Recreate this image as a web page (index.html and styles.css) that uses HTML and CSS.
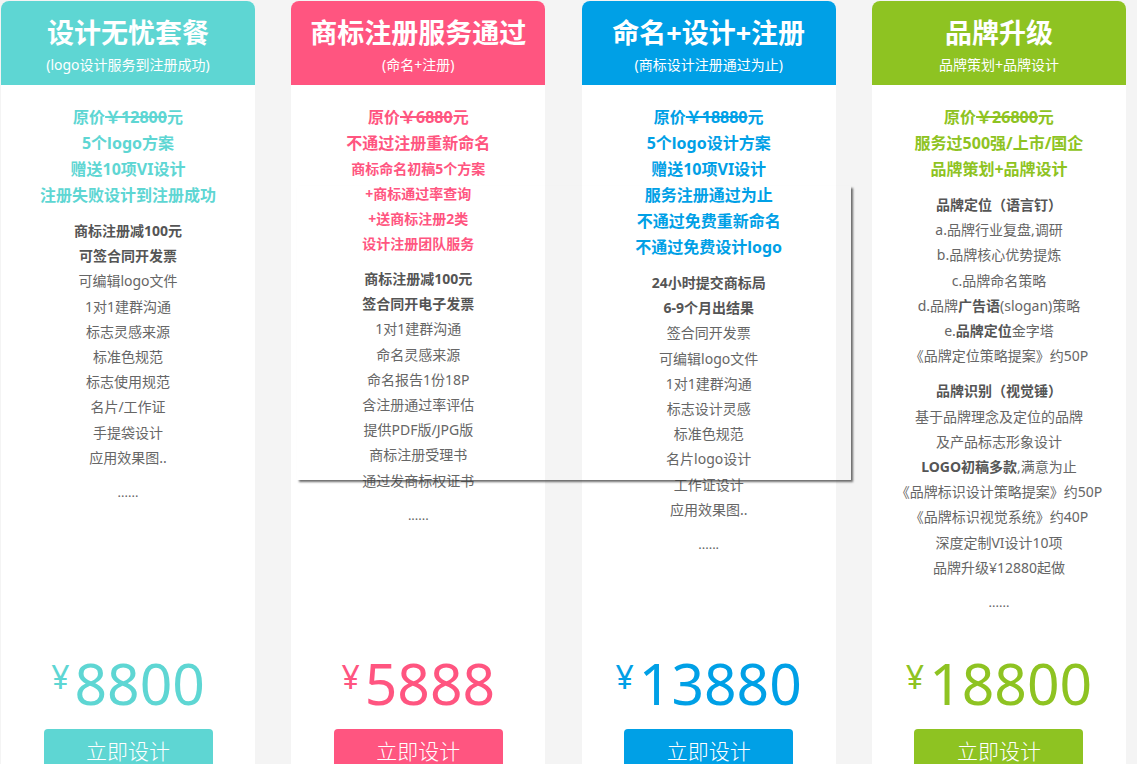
FILE: index.html
```html
<!DOCTYPE html>
<html lang="zh-CN">
<head>
<meta charset="utf-8">
<title>套餐</title>
<link rel="stylesheet" href="styles.css">
</head>
<body>
<div class="page">
  <div class="cards">
    <div class="card teal">
      <div class="head">
        <div class="title">设计无忧套餐</div>
        <div class="sub">(logo设计服务到注册成功)</div>
      </div>
      <div class="body">
        <div class="hi">
          <p class="big">原价<s>￥12800</s>元</p>
          <p class="big">5个logo方案</p>
          <p class="big">赠送10项VI设计</p>
          <p class="big">注册失败设计到注册成功</p>
        </div>
        <div class="list">
          <p class="b">商标注册减100元</p>
          <p class="b">可签合同开发票</p>
          <p>可编辑logo文件</p>
          <p>1对1建群沟通</p>
          <p>标志灵感来源</p>
          <p>标准色规范</p>
          <p>标志使用规范</p>
          <p>名片/工作证</p>
          <p>手提袋设计</p>
          <p>应用效果图..</p>
        </div>
        <div class="list"><p class="dots">......</p></div>
      </div>
      <div class="price"><span class="yen">¥</span>8800</div>
      <a class="btn">立即设计</a>
    </div>

    <div class="card pink">
      <div class="head">
        <div class="title">商标注册服务通过</div>
        <div class="sub">(命名+注册)</div>
      </div>
      <div class="body">
        <div class="hi">
          <p class="big">原价<s>￥6880</s>元</p>
          <p class="big">不通过注册重新命名</p>
          <p class="small">商标命名初稿5个方案</p>
          <p class="small">+商标通过率查询</p>
          <p class="small">+送商标注册2类</p>
          <p class="small">设计注册团队服务</p>
        </div>
        <div class="list">
          <p class="b">商标注册减100元</p>
          <p class="b">签合同开电子发票</p>
          <p>1对1建群沟通</p>
          <p>命名灵感来源</p>
          <p>命名报告1份18P</p>
          <p>含注册通过率评估</p>
          <p>提供PDF版/JPG版</p>
          <p>商标注册受理书</p>
          <p>通过发商标权证书</p>
        </div>
        <div class="list"><p class="dots">......</p></div>
      </div>
      <div class="price"><span class="yen">¥</span>5888</div>
      <a class="btn">立即设计</a>
    </div>

    <div class="card blue">
      <div class="head">
        <div class="title">命名+设计+注册</div>
        <div class="sub">(商标设计注册通过为止)</div>
      </div>
      <div class="body">
        <div class="hi">
          <p class="big">原价<s>￥18880</s>元</p>
          <p class="big">5个logo设计方案</p>
          <p class="big">赠送10项VI设计</p>
          <p class="big">服务注册通过为止</p>
          <p class="big">不通过免费重新命名</p>
          <p class="big">不通过免费设计logo</p>
        </div>
        <div class="list">
          <p class="b">24小时提交商标局</p>
          <p class="b">6-9个月出结果</p>
          <p>签合同开发票</p>
          <p>可编辑logo文件</p>
          <p>1对1建群沟通</p>
          <p>标志设计灵感</p>
          <p>标准色规范</p>
          <p>名片logo设计</p>
          <p>工作证设计</p>
          <p>应用效果图..</p>
        </div>
        <div class="list"><p class="dots">......</p></div>
      </div>
      <div class="price"><span class="yen">¥</span>13880</div>
      <a class="btn">立即设计</a>
    </div>

    <div class="card green">
      <div class="head">
        <div class="title">品牌升级</div>
        <div class="sub">品牌策划+品牌设计</div>
      </div>
      <div class="body">
        <div class="hi">
          <p class="big">原价<s>￥26800</s>元</p>
          <p class="big">服务过500强/上市/国企</p>
          <p class="big">品牌策划+品牌设计</p>
        </div>
        <div class="list">
          <p class="b">品牌定位（语言钉）</p>
          <p>a.品牌行业复盘,调研</p>
          <p>b.品牌核心优势提炼</p>
          <p>c.品牌命名策略</p>
          <p>d.品牌<b>广告语</b>(slogan)策略</p>
          <p>e.<b>品牌定位</b>金字塔</p>
          <p>《品牌定位策略提案》约50P</p>
        </div>
        <div class="list">
          <p class="b">品牌识别（视觉锤）</p>
          <p>基于品牌理念及定位的品牌</p>
          <p>及产品标志形象设计</p>
          <p><b>LOGO初稿多款</b>,满意为止</p>
          <p>《品牌标识设计策略提案》约50P</p>
          <p>《品牌标识视觉系统》约40P</p>
          <p>深度定制VI设计10项</p>
          <p>品牌升级¥12880起做</p>
        </div>
        <div class="list"><p class="dots">......</p></div>
      </div>
      <div class="price"><span class="yen">¥</span>18800</div>
      <a class="btn">立即设计</a>
    </div>
  </div>
  <div class="shadow-box"></div>
</div>
</body>
</html>
```

FILE: styles.css
```css
* { box-sizing: border-box; }
html, body {
  margin: 0;
  padding: 0;
  background: #f4f4f4;
  font-family: "Noto Sans", "Noto Sans CJK SC", sans-serif;
  overflow: hidden;
}
.page {
  position: relative;
  width: 1137px;
  height: 764px;
  overflow: hidden;
}
.cards {
  display: flex;
  gap: 36.33px;
  padding: 1px 0 0 1px;
}
.card {
  width: 254px;
  flex: none;
  background: #fff;
  border-radius: 8px 8px 0 0;
  display: flex;
  flex-direction: column;
  align-items: center;
  height: 820px;
}
.head {
  width: 100%;
  height: 84px;
  border-radius: 8px 8px 0 0;
  color: #fff;
  text-align: center;
  padding-top: 13px;
}
.title {
  font-size: 27px;
  font-weight: 700;
  line-height: 38px;
}
.sub {
  font-size: 14px;
  line-height: 18px;
  margin-top: 4px;
}
.body {
  width: 100%;
  height: 555px;
  padding-top: 19px;
  text-align: center;
}
.body p { margin: 0; }
.hi p.big {
  font-size: 16px;
  font-weight: 700;
  line-height: 26px;
}
.hi p.small {
  font-size: 14px;
  font-weight: 700;
  line-height: 25px;
}
.hi s { text-decoration-thickness: 2px; }
.list {
  margin-top: 10px;
  color: #666;
  font-size: 14px;
  line-height: 25.2px;
}
.list p.b, .list b { font-weight: 700; color: #555; }
.list p.dots { font-size: 13px; }
.price {
  font-size: 57px;
  line-height: 57px;
  font-weight: 400;
  margin-top: 15px;
  display: flex;
  align-items: flex-start;
}
.yen {
  font-size: 32px;
  line-height: 30px;
  margin-top: 7px;
  margin-right: 5px;
}
.btn {
  display: block;
  margin-top: 17px;
  width: 169px;
  height: 44px;
  border-radius: 4px;
  color: #fff;
  font-size: 21px;
  line-height: 44px;
  text-align: center;
  font-weight: 300;
}
.teal .head, .teal .btn { background: #5ed6d3; }
.teal .hi, .teal .price { color: #5ed6d3; }
.pink .head, .pink .btn { background: #ff5580; }
.pink .hi, .pink .price { color: #ff5580; }
.blue .head, .blue .btn { background: #00a0e6; }
.blue .hi, .blue .price { color: #00a0e6; }
.green .head, .green .btn { background: #8ec322; }
.green .hi, .green .price { color: #8ec322; }

.shadow-box {
  position: absolute;
  left: 297px;
  top: 186px;
  width: 554px;
  height: 294px;
  box-shadow: 2px 2px 2px rgba(60, 60, 60, 0.75);
  pointer-events: none;
}
```
